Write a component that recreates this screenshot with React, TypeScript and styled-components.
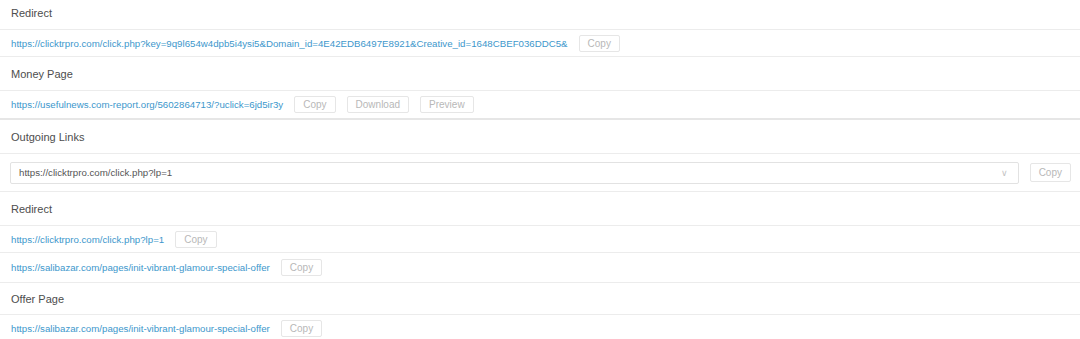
import React from 'react';
import styled, { createGlobalStyle } from 'styled-components';

const GlobalStyle = createGlobalStyle`
  body {
    margin: 0;
    background: #ffffff;
    font-family: "Liberation Sans", Arial, sans-serif;
  }
`;

const Page = styled.div`
  width: 1080px;
  display: flex;
  flex-direction: column;
`;

const Header = styled.div<{ $h?: number; $top?: boolean }>`
  height: ${(p) => p.$h ?? 32}px;
  display: flex;
  align-items: center;
  padding: 0 11px ${(p) => (p.$top ? 4 : 0)}px;
  box-sizing: border-box;
  font-size: 11px;
  color: #4d4d4d;
  border-bottom: 1px solid #ececec;
`;

const Row = styled.div<{ $h?: number; $thick?: boolean }>`
  height: ${(p) => p.$h ?? 26}px;
  display: flex;
  align-items: center;
  gap: 11px;
  padding: 0 11px;
  border-bottom: ${(p) => (p.$thick ? '2px solid #e6e6e6' : '1px solid #ececec')};
`;

const Link = styled.a`
  font-size: 9.7px;
  color: #3d97cc;
  text-decoration: none;
  white-space: nowrap;
`;

const Button = styled.button<{ $h?: number }>`
  height: ${(p) => p.$h ?? 17}px;
  padding: 0 8px;
  font-family: inherit;
  font-size: 10px;
  color: #b8b8b8;
  background: #ffffff;
  border: 1px solid #e6e6e6;
  border-radius: 2px;
  cursor: pointer;
`;

const SelectRow = styled(Row)`
  padding: 0 9px 0 10px;
`;

const Select = styled.div`
  flex: 1;
  height: 22px;
  box-sizing: border-box;
  display: flex;
  align-items: center;
  justify-content: space-between;
  padding: 0 8px 0 8px;
  border: 1px solid #e2e2e2;
  border-radius: 2px;
  font-size: 9.7px;
  color: #555555;
`;

const Chevron = styled.span`
  color: #c4c4c4;
  font-size: 9px;
  margin-right: 2px;
`;

const CopyBtn = () => <Button>Copy</Button>;

const App: React.FC = () => (
  <Page>
    <GlobalStyle />
    <Header $h={30} $top>
      Redirect
    </Header>
    <Row>
      <Link>
        https://clicktrpro.com/click.php?key=9q9l654w4dpb5i4ysi5&amp;Domain_id=4E42EDB6497E8921&amp;Creative_id=1648CBEF036DDC5&amp;
      </Link>
      <CopyBtn />
    </Row>
    <Header $h={34}>Money Page</Header>
    <Row $h={27} $thick>
      <Link>https://usefulnews.com-report.org/5602864713/?uclick=6jd5ir3y</Link>
      <CopyBtn />
      <Button>Download</Button>
      <Button>Preview</Button>
    </Row>
    <Header $h={34}>Outgoing Links</Header>
    <SelectRow $h={37}>
      <Select>
        <span>https://clicktrpro.com/click.php?lp=1</span>
        <Chevron>∨</Chevron>
      </Select>
      <Button $h={19}>Copy</Button>
    </SelectRow>
    <Header $h={34}>Redirect</Header>
    <Row>
      <Link>https://clicktrpro.com/click.php?lp=1</Link>
      <CopyBtn />
    </Row>
    <Row $h={29}>
      <Link>https://salibazar.com/pages/init-vibrant-glamour-special-offer</Link>
      <CopyBtn />
    </Row>
    <Header $h={32}>Offer Page</Header>
    <Row>
      <Link>https://salibazar.com/pages/init-vibrant-glamour-special-offer</Link>
      <CopyBtn />
    </Row>
  </Page>
);

export default App;
